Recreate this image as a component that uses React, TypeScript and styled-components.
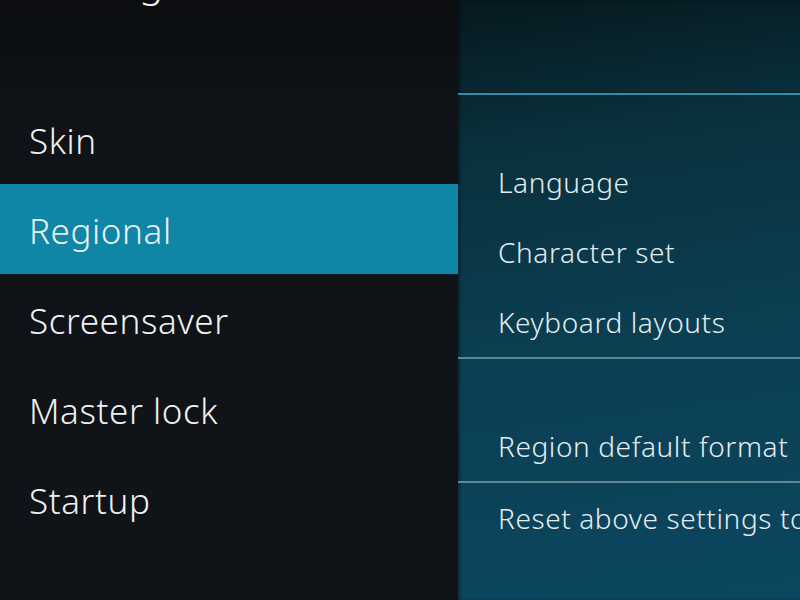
import styled, { createGlobalStyle } from "styled-components";

const GlobalStyle = createGlobalStyle`
  html, body {
    margin: 0;
    padding: 0;
    width: 800px;
    height: 600px;
    overflow: hidden;
    background: #0f1216;
  }
  * {
    box-sizing: border-box;
  }
`;

const Screen = styled.div`
  display: flex;
  width: 800px;
  height: 600px;
  font-family: "Noto Sans", "Open Sans", sans-serif;
  font-weight: 300;
  overflow: hidden;
`;

const Sidebar = styled.div`
  width: 458px;
  flex: none;
  display: flex;
  flex-direction: column;
  background: linear-gradient(180deg, #0b0d10 0%, #0f1216 18%, #101317 100%);
`;

const Header = styled.div`
  height: 94px;
  overflow: hidden;
  padding-left: 29px;
`;

const Title = styled.h1`
  margin: -39px 0 0 0;
  font-size: 40px;
  font-weight: 300;
  line-height: 40px;
  letter-spacing: 1px;
  color: #f2f2f2;
`;

const MenuItem = styled.div<{ $active?: boolean }>`
  height: 90px;
  display: flex;
  align-items: center;
  padding: 3px 0 0 29px;
  font-size: 35px;
  letter-spacing: 0.6px;
  color: #eef1f1;
  background: ${(p) => (p.$active ? "#0f86a6" : "transparent")};
`;

const Content = styled.div`
  flex: 1;
  display: flex;
  flex-direction: column;
  background: linear-gradient(172deg, #06181d 0%, #09303c 22%, #0b3f52 55%, #0b4761 100%);
  box-shadow: inset 2px 0 3px rgba(0, 0, 0, 0.35);
`;

const TopSpace = styled.div`
  height: 93px;
  flex: none;
`;

const AccentLine = styled.div`
  height: 2px;
  flex: none;
  background: #2b8fad;
  box-shadow: 0 -1px 0 rgba(0, 0, 0, 0.35);
`;

const Gap = styled.div`
  height: 52px;
  flex: none;
`;

const Separator = styled.div`
  height: 2px;
  flex: none;
  background: #5d8795;
`;

const SettingRow = styled.div`
  height: 70px;
  flex: none;
  display: flex;
  align-items: center;
  padding-left: 40px;
  font-size: 28px;
  letter-spacing: 0.6px;
  color: #e4edef;
  white-space: nowrap;
  overflow: hidden;
`;

const sections = ["Skin", "Regional", "Screensaver", "Master lock", "Startup"];

export default function App() {
  return (
    <>
      <GlobalStyle />
      <Screen>
        <Sidebar>
          <Header>
            <Title>Settings</Title>
          </Header>
          {sections.map((s) => (
            <MenuItem key={s} $active={s === "Regional"}>
              {s}
            </MenuItem>
          ))}
        </Sidebar>
        <Content>
          <TopSpace />
          <AccentLine />
          <Gap />
          <SettingRow>Language</SettingRow>
          <SettingRow>Character set</SettingRow>
          <SettingRow>Keyboard layouts</SettingRow>
          <Separator />
          <Gap />
          <SettingRow>Region default format</SettingRow>
          <Separator />
          <SettingRow>Reset above settings to default</SettingRow>
        </Content>
      </Screen>
    </>
  );
}
